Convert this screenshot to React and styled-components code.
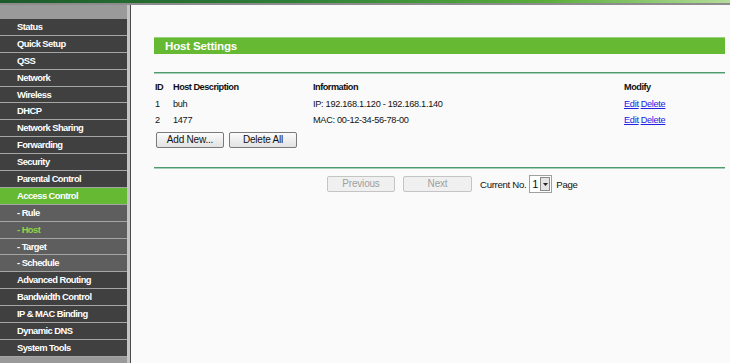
import React from 'react';
import styled, { createGlobalStyle } from 'styled-components';

const GlobalStyle = createGlobalStyle`
  html, body {
    margin: 0;
    padding: 0;
    background: #fafafa;
    font-family: "Liberation Sans", Arial, sans-serif;
    font-size: 9.2px;
    letter-spacing: -0.3px;
    color: #111111;
  }
`;

const Page = styled.div`
  display: flex;
  flex-direction: column;
  height: 363px;
  overflow: hidden;
`;

const TopStrip = styled.div`
  height: 3px;
  background: linear-gradient(to right, #1c5a2a 0%, #2f7f38 40%, #5aae3c 75%, #b5dc9a 100%);
`;

const GrayStrip = styled.div`
  height: 2px;
  background: #8c8c8c;
`;

const Body = styled.div`
  display: flex;
  flex: 1;
`;

const SideBar = styled.div`
  width: 127px;
  background: #9a9a9a;
  border-right: 3px solid #c4c4c4;
  padding-top: 14px;
  display: flex;
  flex-direction: column;
`;

const MenuItem = styled.div`
  height: 15.9px;
  line-height: 16px;
  border-bottom: 1px solid #a5a5a5;
  padding-left: 17px;
  font-weight: bold;
  font-size: 9.4px;
  letter-spacing: -0.55px;
  color: ${({ $active }) => ($active ? '#8fd44a' : '#ffffff')};
  background: ${({ $current, $sub }) => ($current ? '#66b933' : $sub ? '#5e5e5e' : '#404040')};
  white-space: nowrap;
`;

const Main = styled.div`
  flex: 1;
  border-left: 1px solid #4a4a4a;
  padding: 32px 5px 0 23px;
`;

const TitleBar = styled.div`
  height: 16px;
  line-height: 16px;
  background: #66b933;
  border-top: 1px solid #9ccf80;
  color: #ffffff;
  font-weight: bold;
  font-size: 11.6px;
  letter-spacing: -0.2px;
  padding-left: 11px;
`;

const Divider = styled.div`
  height: 1px;
  background: #4f9a6f;
  border-bottom: 1px solid #a8d0b8;
  margin-top: ${({ $top }) => $top}px;
`;

const Table = styled.div`
  margin-top: 5px;
  display: flex;
  flex-direction: column;
`;

const Row = styled.div`
  display: grid;
  grid-template-columns: 18px 140px 311px 1fr;
  height: 16.7px;
  line-height: 17px;
  padding-left: 1px;
  font-weight: ${({ $head }) => ($head ? 'bold' : 'normal')};
  letter-spacing: ${({ $head }) => ($head ? '-0.5px' : '-0.3px')};
`;

const Link = styled.a`
  color: #2020e8;
  text-decoration: underline;
  margin-right: 2px;
  cursor: pointer;
`;

const ButtonRow = styled.div`
  display: flex;
  gap: 5px;
  padding-left: 2px;
  margin-top: 3px;
`;

const Button = styled.div`
  width: ${({ $w }) => $w || 66}px;
  height: 14px;
  line-height: 14px;
  text-align: center;
  font-size: 10px;
  letter-spacing: -0.2px;
  border: 1px solid ${({ $disabled }) => ($disabled ? '#c4c4c4' : '#7a7a7a')};
  border-radius: 2px;
  color: ${({ $disabled }) => ($disabled ? '#a0a0a0' : '#111111')};
  background: ${({ $disabled }) =>
    $disabled ? '#f0f0f0' : 'linear-gradient(#fbfbfb, #e2e2e2)'};
`;

const Pager = styled.div`
  display: flex;
  align-items: center;
  margin-top: 6px;
  padding-left: 173px;
`;

const Label = styled.span`
  font-size: 9.6px;
  margin-left: ${({ $gap }) => $gap || 0}px;
`;

const Select = styled.div`
  display: flex;
  align-items: center;
  width: 21px;
  height: 16px;
  margin-left: 3px;
  border: 1px solid #a0a0a0;
  background: #ffffff;
`;

const SelectValue = styled.span`
  flex: 1;
  padding-left: 2px;
  font-size: 11px;
`;

const SelectArrow = styled.div`
  width: 8px;
  height: 12px;
  margin-right: 1px;
  border: 1px solid #8a8a8a;
  background: #e4e4e4;
  display: flex;
  align-items: center;
  justify-content: center;
`;

const menu = [
  { label: 'Status' },
  { label: 'Quick Setup' },
  { label: 'QSS' },
  { label: 'Network' },
  { label: 'Wireless' },
  { label: 'DHCP' },
  { label: 'Network Sharing' },
  { label: 'Forwarding' },
  { label: 'Security' },
  { label: 'Parental Control' },
  { label: 'Access Control', current: true },
  { label: '- Rule', sub: true },
  { label: '- Host', sub: true, active: true },
  { label: '- Target', sub: true },
  { label: '- Schedule', sub: true },
  { label: 'Advanced Routing' },
  { label: 'Bandwidth Control' },
  { label: 'IP & MAC Binding' },
  { label: 'Dynamic DNS' },
  { label: 'System Tools' },
];

const hosts = [
  { id: 1, desc: 'buh', info: 'IP: 192.168.1.120 - 192.168.1.140' },
  { id: 2, desc: '1477', info: 'MAC: 00-12-34-56-78-00' },
];

export default function App() {
  return (
    <Page>
      <GlobalStyle />
      <TopStrip />
      <GrayStrip />
      <Body>
        <SideBar>
          {menu.map(item => (
            <MenuItem
              key={item.label}
              $sub={item.sub}
              $current={item.current}
              $active={item.active}
            >
              {item.label}
            </MenuItem>
          ))}
        </SideBar>
        <Main>
          <TitleBar>Host Settings</TitleBar>
          <Divider $top={18} />
          <Table>
            <Row $head>
              <span>ID</span>
              <span>Host Description</span>
              <span>Information</span>
              <span>Modify</span>
            </Row>
            {hosts.map(h => (
              <Row key={h.id}>
                <span>{h.id}</span>
                <span>{h.desc}</span>
                <span>{h.info}</span>
                <span>
                  <Link>Edit</Link>
                  <Link>Delete</Link>
                </span>
              </Row>
            ))}
          </Table>
          <ButtonRow>
            <Button>Add New...</Button>
            <Button>Delete All</Button>
          </ButtonRow>
          <Divider $top={19} />
          <Pager>
            <Button $disabled>Previous</Button>
            <Button $disabled $w={67} style={{ marginLeft: 8 }}>Next</Button>
            <Label $gap={8}>Current No.</Label>
            <Select>
              <SelectValue>1</SelectValue>
              <SelectArrow>
                <svg width="5" height="3" viewBox="0 0 5 3">
                  <path d="M0 0 L5 0 L2.5 3 Z" fill="#222" />
                </svg>
              </SelectArrow>
            </Select>
            <Label $gap={4}>Page</Label>
          </Pager>
        </Main>
      </Body>
    </Page>
  );
}
